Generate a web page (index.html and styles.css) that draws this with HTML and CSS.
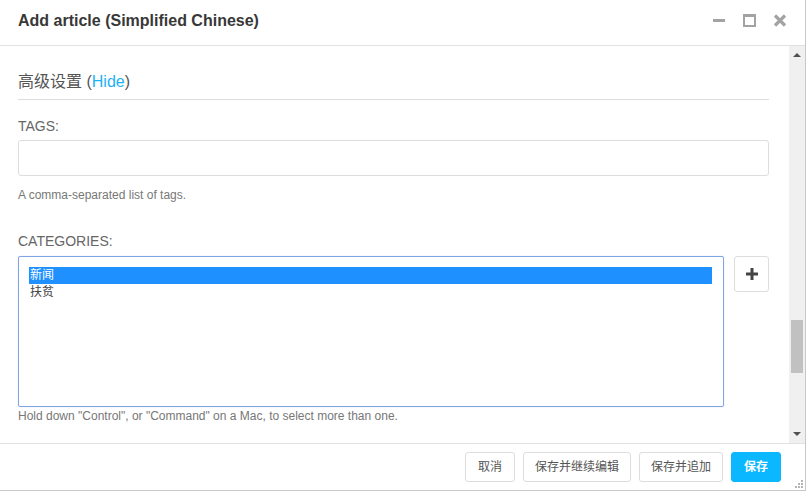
FILE: index.html
```html
<!DOCTYPE html>
<html>
<head>
    <meta charset="utf-8" />
    <title>Add article</title>
    <link rel="stylesheet" href="styles.css">
</head>
<body>
    <div class="dialog">
        <div class="dlg_head">
            <span class="dlg_title">Add article (Simplified Chinese)</span>
            <div class="dlg_tools">
                <span class="tool_min"></span>
                <span class="tool_max"></span>
                <svg class="tool_close" width="14" height="13" viewBox="0 0 14 13">
                    <path d="M2 1.5 L12 11.5 M12 1.5 L2 11.5" stroke="#a3a3a3" stroke-width="3.2" />
                </svg>
            </div>
        </div>
        <div class="dlg_body">
            <div class="dlg_content">
                <div class="section_title">高级设置 (<a href="javascript://">Hide</a>)</div>
                <div class="field">
                    <label>TAGS:</label>
                    <input type="text" class="text_input" />
                    <p class="help">A comma-separated list of tags.</p>
                </div>
                <div class="field field_cat">
                    <label>CATEGORIES:</label>
                    <div class="select_row">
                        <div class="select_box">
                            <div class="opt opt_active">新闻</div>
                            <div class="opt">扶贫</div>
                        </div>
                        <a class="add_btn" href="javascript://">
                            <svg width="14" height="14" viewBox="0 0 14 14">
                                <path d="M7 1 V13 M1 7 H13" stroke="#444" stroke-width="3" />
                            </svg>
                        </a>
                    </div>
                    <p class="help help_tight">Hold down "Control", or "Command" on a Mac, to select more than one.</p>
                </div>
            </div>
            <div class="scrollbar">
                <span class="arrow_up"></span>
                <div class="track"><span class="thumb"></span></div>
                <span class="arrow_down"></span>
            </div>
        </div>
        <div class="dlg_foot">
            <a class="btn" href="javascript://">取消</a>
            <a class="btn" href="javascript://">保存并继续编辑</a>
            <a class="btn" href="javascript://">保存并追加</a>
            <a class="btn btn_primary" href="javascript://">保存</a>
            <span class="grip">
                <svg width="9" height="9" viewBox="0 0 9 9" fill="#b5b5b5">
                    <rect x="7" y="1" width="2" height="2" />
                    <rect x="4" y="4" width="2" height="2" />
                    <rect x="7" y="4" width="2" height="2" />
                    <rect x="1" y="7" width="2" height="2" />
                    <rect x="4" y="7" width="2" height="2" />
                    <rect x="7" y="7" width="2" height="2" />
                </svg>
            </span>
        </div>
    </div>
</body>
</html>
```

FILE: styles.css
```css
html, body {
    margin:0;
    padding:0;
    background:#fff;
}
body {
    font-family:"Liberation Sans", "Noto Sans CJK SC", sans-serif;
    color:#555;
}
.dialog {
    width:805px;
    height:490px;
    border-right:1px solid #c8c8c8;
    border-bottom:1px solid #c8c8c8;
    display:flex;
    flex-direction:column;
    position:relative;
}
/* 头部 */
.dlg_head {
    height:45px;
    border-bottom:1px solid #e1e1e1;
    display:flex;
    align-items:center;
    justify-content:space-between;
    padding:0 18px 0 18px;
    flex-shrink:0;
}
.dlg_title {
    font-size:16px;
    font-weight:bold;
    color:#383838;
    margin-top:-4px;
}
.dlg_tools {
    display:flex;
    align-items:center;
    margin-top:-4px;
}
.tool_min {
    display:block;
    width:12px;
    height:3px;
    background:#a3a3a3;
    margin-right:18px;
}
.tool_max {
    display:block;
    width:9px;
    height:8px;
    border:2px solid #a3a3a3;
    border-top-width:3px;
    margin-right:17px;
}
.tool_close {
    display:block;
}
/* 内容 */
.dlg_body {
    height:397px;
    display:flex;
    flex-shrink:0;
}
.dlg_content {
    flex:1;
    padding:0 20px 0 18px;
}
.section_title {
    margin-top:25px;
    font-size:16px;
    line-height:22px;
    padding-bottom:6px;
    border-bottom:1px solid #ddd;
    color:#555;
}
.section_title a {
    color:#1bb2f5;
    text-decoration:none;
}
.field label {
    display:block;
    margin-top:16px;
    font-size:14px;
    line-height:20px;
    color:#666;
}
.text_input {
    display:block;
    box-sizing:border-box;
    width:100%;
    height:36px;
    margin:4px 0 0;
    border:1px solid #ddd;
    border-radius:3px;
    outline:none;
}
.help {
    margin:11px 0 0;
    font-size:12px;
    line-height:16px;
    color:#777;
}
.field_cat label {
    margin-top:28px;
}
.select_row {
    display:flex;
    align-items:flex-start;
    gap:10px;
    margin-top:5px;
}
.select_box {
    flex:1;
    box-sizing:border-box;
    height:151px;
    border:1px solid #7fa5e3;
    border-radius:2px;
    box-shadow:0 0 1px #a9c4f0;
    padding:10px 11px 0 10px;
}
.opt {
    font-size:12px;
    line-height:17px;
    color:#444;
    padding-left:1px;
}
.opt_active {
    background:#1e90ff;
    color:#fff;
}
.add_btn {
    display:flex;
    align-items:center;
    justify-content:center;
    box-sizing:border-box;
    width:35px;
    height:36px;
    border:1px solid #ddd;
    border-radius:3px;
    background:#fff;
}
.help_tight {
    margin-top:1px;
}
/* 滚动条 */
.scrollbar {
    width:16px;
    background:#f0f0f0;
    display:flex;
    flex-direction:column;
    align-items:center;
}
.arrow_up, .arrow_down {
    display:block;
    width:0;
    height:0;
    border-left:4px solid transparent;
    border-right:4px solid transparent;
}
.arrow_up {
    border-bottom:4px solid #505050;
    margin:7px 0 0;
}
.arrow_down {
    border-top:4px solid #505050;
    margin:0 0 7px;
}
.track {
    flex:1;
    width:100%;
    position:relative;
}
.thumb {
    position:absolute;
    left:2px;
    right:2px;
    top:263px;
    height:53px;
    background:#c1c1c1;
}
/* 底部按钮 */
.dlg_foot {
    flex:1;
    border-top:1px solid #e1e1e1;
    display:flex;
    justify-content:flex-end;
    align-items:flex-start;
    gap:8px;
    padding:8px 24px 0 0;
    position:relative;
}
.btn {
    display:block;
    height:28px;
    line-height:28px;
    padding:0 11px;
    min-width:26px;
    text-align:center;
    border:1px solid #ddd;
    border-radius:3px;
    font-size:12px;
    color:#555;
    text-decoration:none;
    background:#fff;
}
.btn_primary {
    background:#0bb7ff;
    border-color:#0bb7ff;
    color:#fff;
    font-weight:bold;
    padding:0 11px;
}
.grip {
    position:absolute;
    right:2px;
    bottom:2px;
    line-height:0;
}
```
